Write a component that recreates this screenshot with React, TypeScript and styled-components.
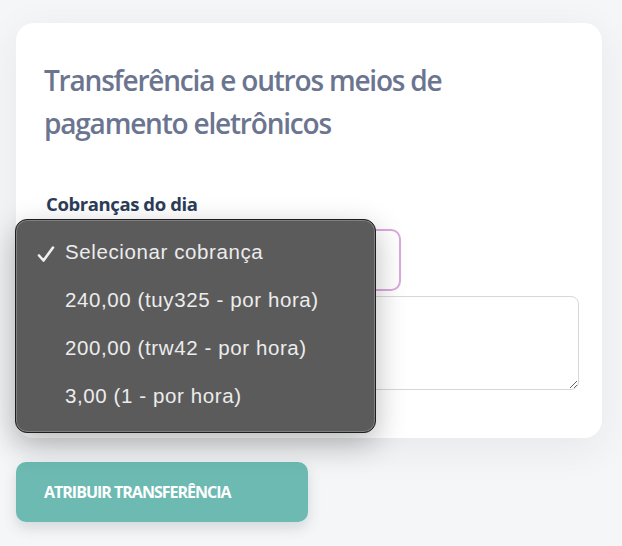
import React from 'react';
import styled, { createGlobalStyle } from 'styled-components';

const GlobalStyle = createGlobalStyle`
  html, body {
    margin: 0;
    padding: 0;
    background: #f5f6f8;
  }
  * {
    box-sizing: border-box;
  }
`;

const charges = [
  { id: 'none', label: 'Selecionar cobrança', selected: true },
  { id: 'tuy325', label: '240,00 (tuy325 - por hora)' },
  { id: 'trw42', label: '200,00 (trw42 - por hora)' },
  { id: '1', label: '3,00 (1 - por hora)' },
];

const App: React.FC = () => {
  return <Page>
      <GlobalStyle />
      <Card>
        <Title>Transferência e outros meios de pagamento eletrônicos</Title>
        <Label>Cobranças do dia</Label>
        <SelectWrap>
          <SelectBox />
          <Menu>
            {
              charges.map(charge => (
                <MenuItem key={charge.id}>
                  <Check>
                    {charge.selected &&
                      <svg width="18" height="18" viewBox="0 0 18 18">
                        <path d="M2 10.5 L6.5 15.5 L16 2.5" fill="none" stroke="#f0f0f0" strokeWidth="2.6" strokeLinecap="round" strokeLinejoin="round" />
                      </svg>
                    }
                  </Check>
                  {charge.label}
                </MenuItem>
              ))
            }
          </Menu>
        </SelectWrap>
        <Notes />
      </Card>
      <SubmitButton>Atribuir transferência</SubmitButton>
    </Page>
}

const Page = styled.div`
  min-height: 546px;
  padding: 23px 20px 24px 16px;
  font-family: "Open Sans", "Noto Sans", sans-serif;
`

const Card = styled.div`
  width: 586px;
  background: #ffffff;
  border-radius: 18px;
  padding: 36px 23px 48px 28px;
  box-shadow: 0 10px 40px rgba(30, 40, 60, 0.07);
`

const Title = styled.h1`
  margin: 0 0 48px 0;
  font-size: 28px;
  line-height: 43px;
  font-weight: 600;
  letter-spacing: -1.2px;
  color: #6b7590;
  width: 480px;
`

const Label = styled.div`
  font-size: 18.5px;
  font-weight: 700;
  letter-spacing: -0.4px;
  color: #2c3c58;
  margin: 0 0 14px 2px;
  line-height: 22px;
`

const SelectWrap = styled.div`
  position: relative;
  height: 62px;
`

const SelectBox = styled.div`
  width: 357px;
  height: 62px;
  border: 2px solid #dca8dc;
  border-radius: 10px;
  background: #fff;
`

const Menu = styled.div`
  position: absolute;
  left: -29px;
  top: -10px;
  width: 361px;
  padding: 8px 0 12px 0;
  background: #5b5b5b;
  border: 1px solid #1e1e1e;
  border-radius: 12px;
  box-shadow: inset 0 0 0 1px rgba(255, 255, 255, 0.22), 0 10px 30px rgba(0, 0, 0, 0.28);
  font-family: "Liberation Sans", Arial, sans-serif;
`

const MenuItem = styled.div`
  display: flex;
  align-items: center;
  height: 48px;
  font-size: 20.5px;
  letter-spacing: 0.6px;
  color: #ececec;
`

const Check = styled.span`
  display: flex;
  align-items: center;
  width: 49px;
  height: 100%;
  padding: 4px 0 0 21px;
`

const Notes = styled.textarea`
  display: block;
  width: 100%;
  margin: 5px 0 0 0;
  height: 94px;
  border: 1px solid #d8d8d8;
  border-radius: 8px;
  background: #fff;
  resize: vertical;
  outline: none;
`

const SubmitButton = styled.button`
  margin-top: 24px;
  width: 292px;
  height: 60px;
  border: none;
  border-radius: 10px;
  background: #6cbab2;
  color: #fff;
  font-family: "Open Sans", "Noto Sans", sans-serif;
  font-size: 16px;
  font-weight: 700;
  text-transform: uppercase;
  letter-spacing: -1px;
  text-align: left;
  padding-left: 28px;
  box-shadow: 0 6px 14px rgba(40, 60, 70, 0.16);
`

export default App;
